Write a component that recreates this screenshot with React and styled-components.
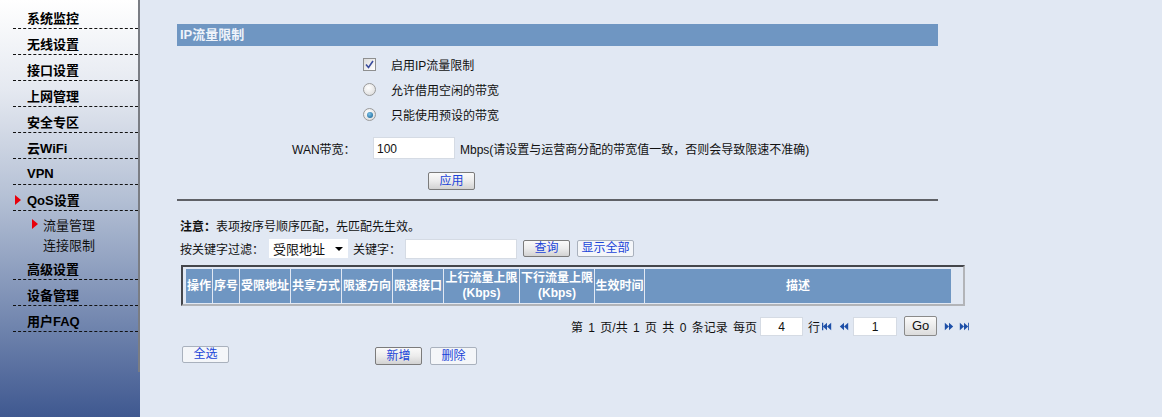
import styled, { createGlobalStyle } from "styled-components"

const GlobalStyle = createGlobalStyle`
  html, body {
    margin: 0;
    padding: 0;
    background: #e1e8f3;
  }
  body {
    font-family: "Liberation Sans", "Noto Sans CJK SC", sans-serif;
    font-size: 12px;
    color: #111;
  }
`

const Page = styled.div`
  display: flex;
  width: 1162px;
  height: 417px;
  overflow: hidden;
  background: #e1e8f3;
`

const Sidebar = styled.div`
  width: 140px;
  flex-shrink: 0;
  display: flex;
  flex-direction: column;
  background: linear-gradient(to bottom, #ffffff 0%, #e4e8f0 22%, #b3bfd4 48%, #7e91b6 72%, #3f5890 100%);
`

const Menu = styled.div`
  height: 372px;
  box-sizing: border-box;
  border-right: 2px solid #7a7d84;
  padding: 3px 0 0 13px;
`

const MenuItem = styled.div`
  display: flex;
  align-items: center;
  height: 21px;
  padding-top: 4px;
  border-bottom: 1px dashed #111;
  font-size: 13px;
  font-weight: bold;
  color: #000;
`

const Marker = styled.span`
  display: flex;
  align-items: center;
  width: ${({ $w }) => $w}px;
  flex-shrink: 0;
  padding-left: 2px;
  box-sizing: border-box;
`

const Arrow = styled.span`
  width: 0;
  height: 0;
  border-left: 6px solid #e8000b;
  border-top: 5px solid transparent;
  border-bottom: 5px solid transparent;
`

const SubList = styled.div`
  padding: 3px 0 0 17px;
`

const SubItem = styled.div`
  display: flex;
  align-items: center;
  height: 20px;
  font-size: 13px;
  color: #111;
`

const Main = styled.div`
  flex: 1;
  padding: 24px 0 0 37px;
`

const TitleBar = styled.div`
  width: 761px;
  height: 22px;
  line-height: 22px;
  box-sizing: border-box;
  padding-left: 3px;
  background: #6f96c2;
  color: #eef3fa;
  font-size: 13px;
  font-weight: bold;
`

const Options = styled.div`
  margin-top: 6px;
`

const OptionRow = styled.label`
  display: flex;
  align-items: center;
  height: 25px;
  padding-left: 186px;
`

const Control = styled.span`
  display: flex;
  align-items: center;
  width: 28px;
`

const CheckBox = styled.span`
  display: flex;
  align-items: center;
  justify-content: center;
  width: 11px;
  height: 11px;
  border: 1px solid #8e8f8f;
  background: linear-gradient(135deg, #dcdcdc, #ffffff);
`

const Radio = styled.span`
  display: flex;
  align-items: center;
  justify-content: center;
  width: 11px;
  height: 11px;
  border-radius: 50%;
  border: 1px solid #9a9a9a;
  background: radial-gradient(circle at 40% 35%, #ffffff, #d6d6d6);
`

const RadioDot = styled.span`
  width: 6px;
  height: 6px;
  border-radius: 50%;
  background: radial-gradient(circle at 40% 35%, #7ec3ea, #0d5a8c);
`

const WanRow = styled.div`
  display: flex;
  align-items: center;
  height: 22px;
  margin-top: 10px;
  padding-left: 115px;
  font-size: 12px;
`

const WanLabel = styled.span`
  width: 81px;
  flex-shrink: 0;
`

const TextInput = styled.div`
  width: ${({ $w }) => $w}px;
  height: ${({ $h }) => $h || 20}px;
  line-height: ${({ $h }) => $h || 20}px;
  box-sizing: border-box;
  background: #fff;
  border: 1px solid #d5dbe4;
  padding: 0 3px;
  text-align: ${({ $center }) => ($center ? "center" : "left")};
  font-size: 12px;
  color: #111;
  flex-shrink: 0;
`

const Hint = styled.span`
  margin-left: 5px;
  white-space: nowrap;
`

const ButtonRow = styled.div`
  display: flex;
  align-items: flex-start;
  margin-top: ${({ $mt }) => $mt}px;
  padding-left: ${({ $pl }) => $pl}px;
`

const Button = styled.div`
  width: ${({ $w }) => $w || 47}px;
  height: ${({ $h }) => $h || 18}px;
  line-height: ${({ $h }) => ($h || 18) - 2}px;
  margin-left: ${({ $ml }) => $ml || 0}px;
  margin-top: ${({ $mt }) => $mt || 0}px;
  box-sizing: border-box;
  text-align: center;
  font-size: 12px;
  color: #1a44d8;
  border-radius: 2px;
  flex-shrink: 0;
  border: 1px solid ${({ $light }) => ($light ? "#a9b1bd" : "#7b7b7b")};
  background: ${({ $light }) =>
    $light ? "#f4f6f9" : "linear-gradient(to bottom, #fafafa 0%, #ececec 50%, #d2d2d2 100%)"};
`

const Rule = styled.div`
  width: 761px;
  margin-top: 9px;
  border-top: 2px solid #5f6166;
`

const Note = styled.div`
  margin-top: 18px;
  padding-left: 3px;
  line-height: 16px;
  font-size: 12px;
`

const FilterRow = styled.div`
  display: flex;
  align-items: center;
  height: 21px;
  margin-top: 3px;
  padding-left: 3px;
  font-size: 12px;
`

const Select = styled.div`
  display: flex;
  align-items: center;
  justify-content: space-between;
  width: 79px;
  height: 19px;
  margin-left: 5px;
  padding: 0 5px 0 4px;
  box-sizing: border-box;
  background: #fff;
  font-size: 13px;
`

const Caret = styled.span`
  width: 0;
  height: 0;
  border-top: 4px solid #000;
  border-left: 4px solid transparent;
  border-right: 4px solid transparent;
`

const Gap = styled.span`
  margin-left: ${({ $w }) => $w}px;
`

const Frame = styled.div`
  width: 784px;
  margin: 6px 0 0 4px;
  box-sizing: border-box;
  padding: 2px 11px 1px 3px;
  border-style: solid;
  border-width: 2px;
  border-color: #44464b #b2b4b8 #b2b4b8 #44464b;
`

const Table = styled.table`
  width: 767px;
  border-collapse: separate;
  border-spacing: 1px 0;
  margin-left: -1px;
  table-layout: fixed;
`

const Th = styled.th`
  height: 34px;
  padding: 0;
  background: #6f96c2;
  color: #fff;
  font-size: 12px;
  font-weight: bold;
  line-height: 15px;
  text-align: center;
  white-space: nowrap;
  overflow: hidden;
`

const Pager = styled.div`
  display: flex;
  align-items: center;
  height: 20px;
  margin-top: 10px;
  padding-left: 394px;
  font-size: 12px;
  white-space: nowrap;
  word-spacing: 2px;
`

const NavIcon = styled.svg`
  width: 10px;
  height: 9px;
  margin-left: ${({ $ml }) => $ml}px;
  flex-shrink: 0;
`

const GoButton = styled.div`
  width: 33px;
  height: 20px;
  line-height: 18px;
  margin-left: 7px;
  box-sizing: border-box;
  text-align: center;
  font-size: 13px;
  border: 1px solid #8a8a8a;
  border-radius: 2px;
  background: linear-gradient(to bottom, #fbfbfb, #dcdcdc);
  color: #111;
`

const menu = ["系统监控", "无线设置", "接口设置", "上网管理", "安全专区", "云WiFi", "VPN"]
const menuAfter = ["高级设置", "设备管理", "用户FAQ"]
const columns = [
  ["操作", 26],
  ["序号", 26],
  ["受限地址", 50],
  ["共享方式", 50],
  ["限速方向", 50],
  ["限速接口", 50],
  ["上行流量上限\n(Kbps)", 75],
  ["下行流量上限\n(Kbps)", 74],
  ["生效时间", 49],
  ["描述", 306],
]

const Nav = ({ dir, bar, ml }) => {
  const tri = dir === "left"
    ? ["M5 0 L0 4.5 L5 9 Z", "M10 0 L5 4.5 L10 9 Z"]
    : ["M0 0 L5 4.5 L0 9 Z", "M5 0 L10 4.5 L5 9 Z"]
  return (
    <NavIcon $ml={ml} viewBox="-1 0 12 9">
      {tri.map((d) => <path key={d} d={d} fill="#1d4fa8" />)}
      {bar && <rect x={dir === "left" ? -1 : 10} y="0" width="1.5" height="9" fill="#1d4fa8" />}
    </NavIcon>
  )
}

const App = () => {
  return (
    <Page>
      <GlobalStyle />
      <Sidebar>
        <Menu>
          {menu.map((m) => (
            <MenuItem key={m}>
              <Marker $w={14} />
              {m}
            </MenuItem>
          ))}
          <MenuItem>
            <Marker $w={14}><Arrow /></Marker>
            QoS设置
          </MenuItem>
          <SubList>
            <SubItem>
              <Marker $w={13}><Arrow /></Marker>
              流量管理
            </SubItem>
            <SubItem>
              <Marker $w={13} />
              连接限制
            </SubItem>
          </SubList>
          {menuAfter.map((m) => (
            <MenuItem key={m}>
              <Marker $w={14} />
              {m}
            </MenuItem>
          ))}
        </Menu>
      </Sidebar>
      <Main>
        <TitleBar>IP流量限制</TitleBar>
        <Options>
          <OptionRow>
            <Control>
              <CheckBox>
                <svg width="9" height="9" viewBox="0 0 9 9">
                  <path d="M1 4.5 L3.5 7.5 L8 1" fill="none" stroke="#3a4c9c" strokeWidth="1.6" />
                </svg>
              </CheckBox>
            </Control>
            启用IP流量限制
          </OptionRow>
          <OptionRow>
            <Control><Radio /></Control>
            允许借用空闲的带宽
          </OptionRow>
          <OptionRow>
            <Control><Radio><RadioDot /></Radio></Control>
            只能使用预设的带宽
          </OptionRow>
        </Options>
        <WanRow>
          <WanLabel>WAN带宽：</WanLabel>
          <TextInput $w={82} $h={22}>100</TextInput>
          <Hint>Mbps(请设置与运营商分配的带宽值一致，否则会导致限速不准确)</Hint>
        </WanRow>
        <ButtonRow $mt={13} $pl={251}>
          <Button>应用</Button>
        </ButtonRow>
        <Rule />
        <Note><b>注意：</b>表项按序号顺序匹配，先匹配先生效。</Note>
        <FilterRow>
          按关键字过滤：
          <Select>受限地址<Caret /></Select>
          <Gap $w={5} />
          关键字：
          <Gap $w={4} />
          <TextInput $w={112} $h={20} />
          <Button $ml={6} $h={17}>查询</Button>
          <Button $ml={7} $w={57} $h={17} $light>显示全部</Button>
        </FilterRow>
        <Frame>
          <Table>
            <colgroup>
              {columns.map(([t, w]) => <col key={t} style={{ width: w }} />)}
            </colgroup>
            <thead>
              <tr>
                {columns.map(([t]) => (
                  <Th key={t}>
                    {t.split("\n").map((line, i) => <div key={i}>{line}</div>)}
                  </Th>
                ))}
              </tr>
            </thead>
          </Table>
        </Frame>
        <Pager>
          第 1 页/共 1 页 共 0 条记录 每页
          <Gap $w={3} />
          <TextInput $w={43} $h={19} $center>4</TextInput>
          <Gap $w={5} />
          行
          <Nav dir="left" bar ml={2} />
          <Nav dir="left" ml={7} />
          <TextInput $w={44} $h={19} $center style={{ marginLeft: 4 }}>1</TextInput>
          <GoButton>Go</GoButton>
          <Nav dir="right" ml={7} />
          <Nav dir="right" bar ml={5} />
        </Pager>
        <ButtonRow $mt={10} $pl={5}>
          <Button $h={17} $light>全选</Button>
          <Button $ml={146} $mt={1}>新增</Button>
          <Button $ml={8} $mt={1} $light>删除</Button>
        </ButtonRow>
      </Main>
    </Page>
  )
}

export default App
